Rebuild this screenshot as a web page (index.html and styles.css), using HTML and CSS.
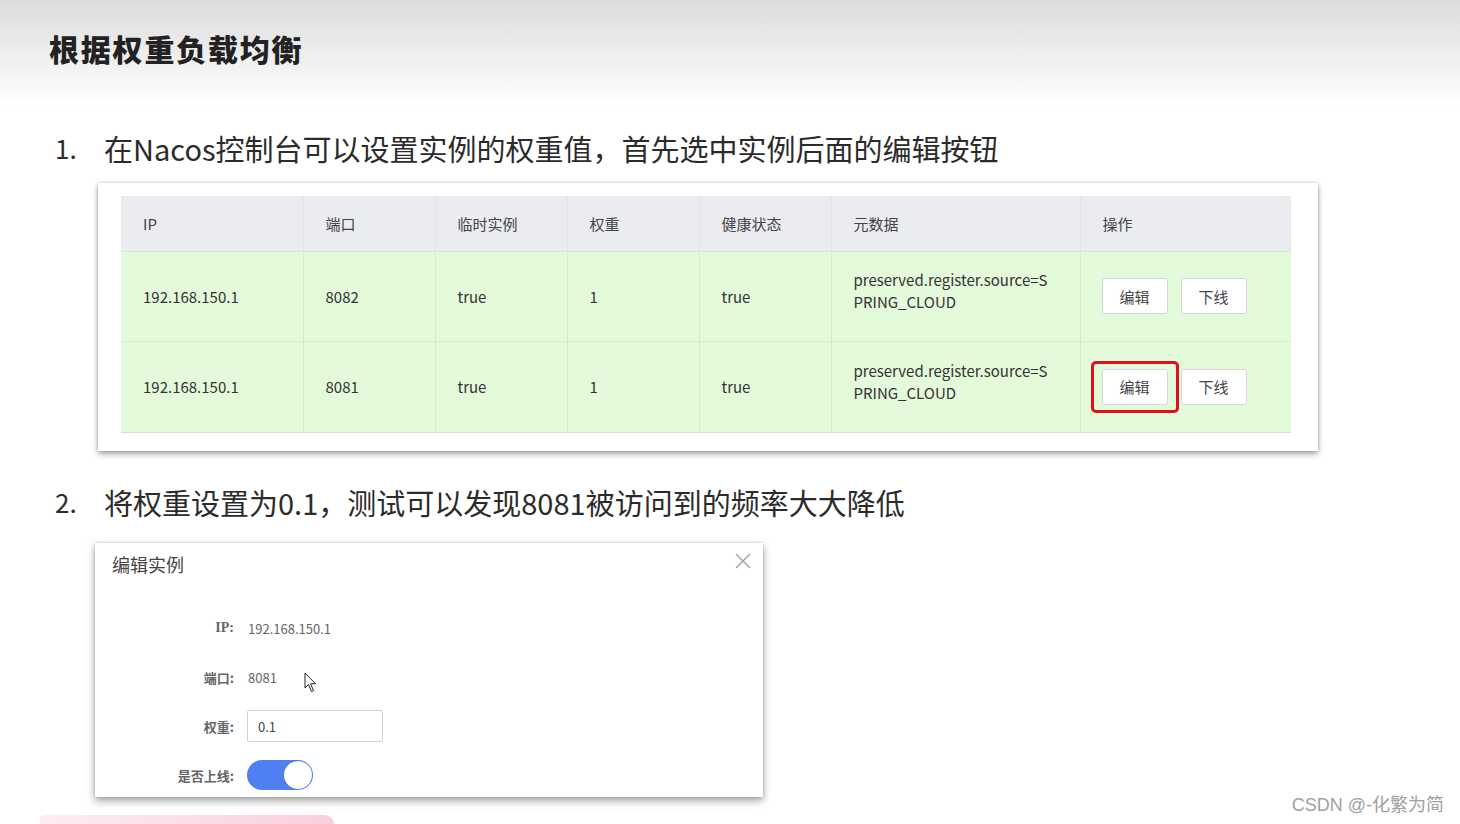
FILE: index.html
```html
<!DOCTYPE html>
<html lang="zh">
<head>
<meta charset="utf-8">
<link rel="stylesheet" href="styles.css">
</head>
<body>
<div class="slide">
  <header class="top">
    <h1 class="title">根据权重负载均衡</h1>
  </header>

  <div class="step step1"><span class="num">1.</span><span class="txt">在Nacos控制台可以设置实例的权重值，首先选中实例后面的编辑按钮</span></div>

  <div class="card">
    <table class="grid">
      <colgroup>
        <col style="width:182px"><col style="width:132px"><col style="width:132px"><col style="width:132px"><col style="width:132px"><col style="width:249px"><col style="width:211px">
      </colgroup>
      <thead>
        <tr><th>IP</th><th>端口</th><th>临时实例</th><th>权重</th><th>健康状态</th><th>元数据</th><th>操作</th></tr>
      </thead>
      <tbody>
        <tr>
          <td>192.168.150.1</td><td>8082</td><td>true</td><td>1</td><td>true</td>
          <td class="meta">preserved.register.source=S<br>PRING_CLOUD</td>
          <td class="ops"><div class="btns"><span class="btn">编辑</span><span class="btn">下线</span></div></td>
        </tr>
        <tr>
          <td>192.168.150.1</td><td>8081</td><td>true</td><td>1</td><td>true</td>
          <td class="meta">preserved.register.source=S<br>PRING_CLOUD</td>
          <td class="ops"><div class="btns"><span class="hl"><span class="btn">编辑</span></span><span class="btn">下线</span></div></td>
        </tr>
      </tbody>
    </table>
  </div>

  <div class="step step2"><span class="num">2.</span><span class="txt">将权重设置为0.1，测试可以发现8081被访问到的频率大大降低</span></div>

  <div class="dialog">
    <div class="dlg-head">
      <span class="dlg-title">编辑实例</span>
      <svg class="close" width="16" height="16" viewBox="0 0 16 16"><path d="M1 1 L15 15 M15 1 L1 15" stroke="#9a9a9a" stroke-width="1.3" fill="none"/></svg>
    </div>
    <div class="form">
      <div class="row"><label class="lab ip">IP:</label><span class="val">192.168.150.1</span></div>
      <div class="row"><label class="lab">端口:</label><span class="val">8081</span>
        <svg class="cursor" width="14" height="21" viewBox="0 0 14 21"><path d="M1 1 L1 16 L4.5 12.5 L7.5 19.5 L9.5 18.6 L6.6 11.8 L11.5 11.8 Z" fill="#fff" stroke="#222" stroke-width="1" stroke-linejoin="round"/></svg>
      </div>
      <div class="row"><label class="lab">权重:</label><span class="input">0.1</span></div>
      <div class="row"><label class="lab">是否上线:</label><span class="switch"><span class="knob"></span></span></div>
    </div>
  </div>

  <div class="stroke"></div>
  <div class="mark">CSDN @-化繁为简</div>
</div>
</body>
</html>
```
FILE: styles.css
```css
* { box-sizing: border-box; }
html, body { margin: 0; padding: 0; }
body {
  width: 1460px;
  height: 824px;
  overflow: hidden;
  background: #fff;
  font-family: "Noto Sans CJK SC", "Noto Sans", sans-serif;
  color: #333;
}
.slide {
  position: relative;
  width: 1460px;
  height: 824px;
  background: linear-gradient(to bottom, #dcdcdc 0px, #f3f3f3 70px, #ffffff 105px);
}
.top {
  height: 100px;
  padding: 27px 0 0 49px;
}
.title {
  margin: 0;
  font-size: 30px;
  line-height: 42px;
  font-weight: 900;
  color: #222;
  letter-spacing: 1.8px;
}
.step {
  display: flex;
  align-items: center;
  font-size: 29px;
  line-height: 40px;
  color: #2b2b2b;
  padding-left: 55px;
}
.step .num { width: 49px; font-size: 26px; }
.step1 { margin-top: 28px; }
.card {
  margin: 15px 0 0 98px;
  width: 1220px;
  height: 268px;
  background: #fff;
  padding: 13px 27px 19px 23px;
  box-shadow: 0 3px 6px rgba(0,0,0,0.35), 0 0 3px rgba(0,0,0,0.2);
}
.grid {
  border-collapse: collapse;
  table-layout: fixed;
  width: 1170px;
  font-size: 15px;
  color: #333;
}
.grid th {
  height: 55px;
  background: #ebecf0;
  font-weight: 400;
  text-align: left;
  padding: 0 0 0 22px;
  border-right: 1px solid #e0e2e6;
  color: #444;
}
.grid th:last-child { border-right: none; }
.grid td {
  height: 90px;
  background: #e3fadb;
  padding: 0 0 0 22px;
  border-right: 1px solid #d4ecd0;
  border-top: 1px solid #d4ecd0;
  vertical-align: middle;
}
.grid td:last-child { border-right: none; }
.grid tbody tr:last-child td { height: 91px; border-bottom: 1px solid #d8ddd8; }
.grid td.meta { line-height: 22px; padding-bottom: 10px; }
.grid td.ops { padding-left: 21px; }
.btns { display: flex; align-items: center; gap: 13px; }
.btn {
  display: inline-flex;
  align-items: center;
  justify-content: center;
  width: 66px;
  height: 36px;
  background: #fff;
  border: 1px solid #d6d6d6;
  border-radius: 3px;
  font-size: 15px;
  color: #444;
}
.hl {
  display: inline-flex;
  margin: -8px -11px;
  padding: 5px 8px;
  border: 3px solid #e0101a;
  border-radius: 5px;
  position: relative;
  z-index: 1;
}
.step2 { margin-top: 31px; }
.dialog {
  margin: 21px 0 0 95px;
  width: 668px;
  height: 254px;
  background: #fff;
  box-shadow: 0 4px 8px rgba(0,0,0,0.35), 0 0 3px rgba(0,0,0,0.2);
  position: relative;
}
.dlg-head {
  display: flex;
  justify-content: space-between;
  padding: 9px 12px 0 17px;
}
.dlg-title { font-size: 18px; color: #444; line-height: 24px; }
.close { margin-top: 1px; }
.form {
  padding-top: 36px;
  display: flex;
  flex-direction: column;
  gap: 17px;
}
.row {
  display: flex;
  align-items: center;
  height: 32px;
  position: relative;
}
.lab {
  width: 139px;
  text-align: right;
  font-size: 13px;
  font-weight: 700;
  color: #666;
}
.lab.ip { font-family: "Liberation Serif", serif; font-size: 14px; }
.val { margin-left: 14px; font-size: 13px; color: #666; }
.cursor { position: absolute; left: 209px; top: 11px; }
.input {
  margin-left: 13px;
  width: 136px;
  height: 32px;
  border: 1px solid #cfd2d8;
  border-radius: 2px;
  font-size: 13px;
  color: #444;
  padding-left: 10px;
  display: flex;
  align-items: center;
}
.switch {
  margin-left: 13px;
  width: 66px;
  height: 30px;
  border-radius: 15px;
  background: #4f7ff0;
  position: relative;
  display: inline-block;
}
.knob {
  position: absolute;
  right: 1px;
  top: 1px;
  width: 28px;
  height: 28px;
  border-radius: 50%;
  background: #fff;
  box-shadow: 0 0 1px rgba(0,0,0,0.3);
}
.stroke {
  position: absolute;
  left: 40px;
  top: 815px;
  width: 294px;
  height: 9px;
  background: linear-gradient(to right, rgba(250,210,222,0.4), rgba(250,195,212,0.8));
  border-radius: 6px 12px 0 0;
}
.mark {
  position: absolute;
  right: 16px;
  top: 792px;
  font-family: "Liberation Sans", "Noto Sans CJK SC", sans-serif;
  font-size: 18px;
  color: #a0a0a0;
  line-height: 26px;
}
```
